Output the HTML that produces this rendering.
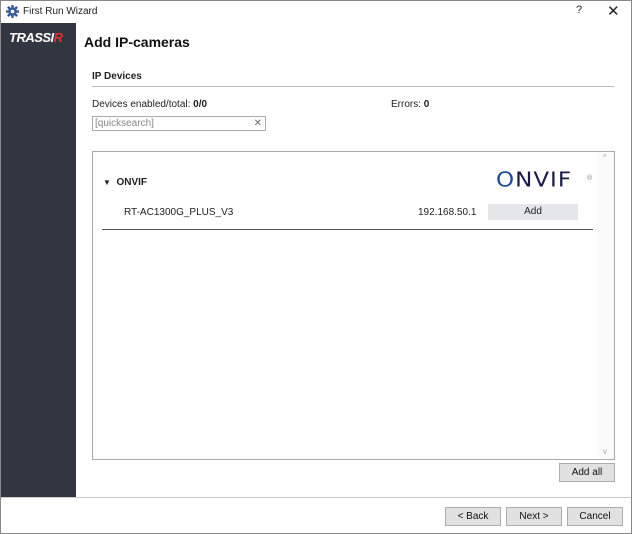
<!DOCTYPE html>
<html><head><style>
*{margin:0;padding:0;box-sizing:border-box}
body{width:632px;height:534px;position:relative;background:#fff;font-family:"Liberation Sans",sans-serif;font-size:10px;color:#222;overflow:hidden}
.a{position:absolute}
.btn{position:absolute;background:#e1e1e1;border:1px solid #adadad;text-align:center;font-size:10px;line-height:18px;color:#111}
</style></head><body>
<div class="a" style="left:0;top:0;width:632px;height:534px;border:1px solid #888"></div>
<svg class="a" style="left:6px;top:5px" width="13" height="13" viewBox="0 0 13 13"><g fill="#3a5a9a"><circle cx="6.5" cy="6.5" r="4.3"/><rect x="5.3" y="0" width="2.4" height="13"/><rect x="0" y="5.3" width="13" height="2.4"/><rect x="5.3" y="0" width="2.4" height="13" transform="rotate(45 6.5 6.5)"/><rect x="5.3" y="0" width="2.4" height="13" transform="rotate(-45 6.5 6.5)"/></g><circle cx="6.5" cy="6.5" r="1.8" fill="#fff"/></svg>
<div class="a" style="left:23px;top:6px;font-size:10px">First Run Wizard</div>
<div class="a" style="left:576px;top:4px;font-size:11px">?</div>
<div class="a" style="left:607px;top:2px;font-size:15px">✕</div>
<div class="a" style="left:1px;top:23px;width:75px;height:474px;background:#323641"></div>
<div class="a" style="left:9px;top:30px;color:#fff;font-weight:bold;font-style:italic;font-size:13px;letter-spacing:-0.5px">TRASSI<span style="color:#e0302a">R</span></div>
<div class="a" style="left:84px;top:34px;font-size:14px;font-weight:bold;color:#111">Add IP-cameras</div>
<div class="a" style="left:92px;top:71px;font-weight:bold">IP Devices</div>
<div class="a" style="left:92px;top:86px;width:522px;height:1px;background:#bbb"></div>
<div class="a" style="left:92px;top:99px">Devices enabled/total: <b>0/0</b></div>
<div class="a" style="left:391px;top:99px">Errors: <b>0</b></div>
<div class="a" style="left:92px;top:116px;width:174px;height:15px;border:1px solid #aaa;color:#888;padding-left:2px;line-height:13px">[quicksearch]<span style="position:absolute;right:3px;color:#666">✕</span></div>
<div class="a" style="left:92px;top:151px;width:523px;height:309px;border:1px solid #aaa"></div>
<div class="a" style="left:598px;top:152px;width:16px;height:307px;background:#fafafa"></div>
<div class="a" style="left:603px;top:153px;color:#aaa;font-size:8px">^</div>
<div class="a" style="left:603px;top:447px;color:#aaa;font-size:8px">v</div>
<div class="a" style="left:103px;top:177px;font-weight:bold;font-size:10px"><span style="font-size:8px">▼</span>&nbsp; ONVIF</div>
<div class="a" style="left:496px;top:167px;font-size:23px;color:#1a1a4a;letter-spacing:1px;font-family:'DejaVu Sans',sans-serif;transform:scaleY(0.9)"><span style="color:#1a4a9a">O</span>NVIF</div>
<div class="a" style="left:587px;top:175px;font-size:7px;color:#888">®</div>
<div class="a" style="left:124px;top:207px">RT-AC1300G_PLUS_V3</div>
<div class="a" style="left:418px;top:207px">192.168.50.1</div>
<div class="a" style="left:488px;top:204px;width:90px;height:16px;background:#e4e6e8;text-align:center;line-height:16px">Add</div>
<div class="a" style="left:102px;top:229px;width:491px;height:1px;background:#555"></div>
<div class="btn" style="left:559px;top:463px;width:56px;height:19px">Add all</div>
<div class="a" style="left:1px;top:497px;width:630px;height:1px;background:#ccc"></div>
<div class="btn" style="left:445px;top:507px;width:56px;height:19px">&lt; Back</div>
<div class="btn" style="left:506px;top:507px;width:56px;height:19px">Next &gt;</div>
<div class="btn" style="left:567px;top:507px;width:56px;height:19px">Cancel</div>
</body></html>
